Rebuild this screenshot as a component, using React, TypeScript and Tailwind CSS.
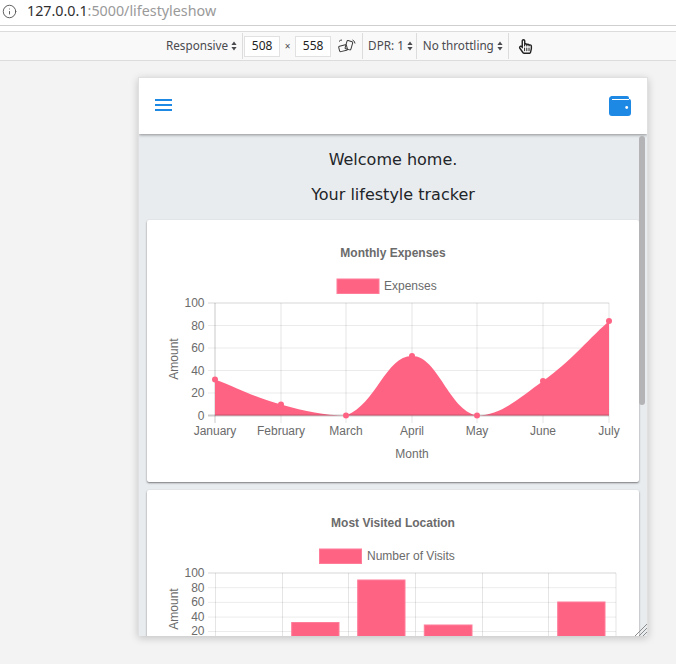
import { Info } from "lucide-react";
import { FaRegHandPointer } from "react-icons/fa";

const sans = "font-['Liberation_Sans',Arial,sans-serif]";
const ui = "font-['Noto_Sans',sans-serif]";

const months = ["January", "February", "March", "April", "May", "June", "July"];
const expenseX = [68, 134, 199, 265, 330, 396, 462];
const expenseY = [159.5, 184.5, 195.5, 136, 195.5, 161, 101];

// same control points chart.js uses for tension 0.4
function curve(xs: number[], ys: number[], floor: number) {
    const cp = (i: number, dir: number) => {
        const p = Math.max(i - 1, 0);
        const n = Math.min(i + 1, xs.length - 1);
        const d1 = Math.hypot(xs[i] - xs[p], ys[i] - ys[p]);
        const d2 = Math.hypot(xs[n] - xs[i], ys[n] - ys[i]);
        const total = d1 + d2 || 1;
        const f = dir < 0 ? (0.4 * d1) / total : (0.4 * d2) / total;
        return [xs[i] + dir * f * (xs[n] - xs[p]), Math.min(ys[i] + dir * f * (ys[n] - ys[p]), floor)];
    };
    let d = `M${xs[0]} ${ys[0]}`;
    for (let i = 0; i < xs.length - 1; i++) {
        const a = cp(i, 1);
        const b = cp(i + 1, -1);
        d += ` C${a[0]} ${a[1]} ${b[0]} ${b[1]} ${xs[i + 1]} ${ys[i + 1]}`;
    }
    return d;
}

function ExpensesChart() {
    const hLines = [83, 105.5, 128, 150.5, 173];
    return (
        <svg width="492" height="262" className="block">
            <text x="246" y="37" textAnchor="middle" fontSize="12" fontWeight="700" fill="#6b6b6b">
                Monthly Expenses
            </text>
            <rect x="190" y="59" width="42" height="14.5" fill="#ff6384" stroke="#ff7d99" strokeWidth="1" />
            <text x="237" y="70" fontSize="12" fill="#6b6b6b">
                Expenses
            </text>
            {hLines.map((y) => (
                <line key={y} x1="61" x2="462" y1={y} y2={y} stroke="rgba(0,0,0,0.08)" strokeWidth={y === 83 ? 2 : 1} />
            ))}
            {expenseX.map((x, i) => (
                <line key={x} x1={x} x2={x} y1="83" y2="203" stroke={i === 0 ? "rgba(0,0,0,0.14)" : "rgba(0,0,0,0.07)"} strokeWidth="1.5" />
            ))}
            <path d={`${curve(expenseX, expenseY, 195.5)} L462 195.5 L68 195.5 Z`} fill="#ff6384" />
            <line x1="61" x2="462" y1="195.5" y2="195.5" stroke="rgba(0,0,0,0.2)" strokeWidth="2" />
            {expenseX.map((x, i) => (
                <circle key={x} cx={x} cy={expenseY[i]} r="3" fill="#ff6384" />
            ))}
            {[100, 80, 60, 40, 20, 0].map((v, i) => (
                <text key={v} x="57.5" y={87 + i * 22.5} textAnchor="end" fontSize="12" fill="#6b6b6b">
                    {v}
                </text>
            ))}
            {months.map((m, i) => (
                <text key={m} x={expenseX[i]} y="215" textAnchor="middle" fontSize="12" fill="#6b6b6b">
                    {m}
                </text>
            ))}
            <text x="265" y="238" textAnchor="middle" fontSize="12" fill="#6b6b6b">
                Month
            </text>
            <text transform="translate(31 139) rotate(-90)" textAnchor="middle" fontSize="12" fill="#6b6b6b">
                Amount
            </text>
        </svg>
    );
}

function VisitsChart() {
    const hLines = [83, 97.7, 112.4, 127.1, 141.5];
    const vLines = [68.5, 135.5, 201.5, 268.5, 335.5, 401.5, 469];
    const bars = [
        { x: 144.7, w: 47.3, y: 132.5 },
        { x: 210.7, w: 47.3, y: 90 },
        { x: 277.3, w: 47.7, y: 135 },
        { x: 410.7, w: 47.3, y: 112 },
    ];
    return (
        <svg width="492" height="262" className="block">
            <text x="246" y="37" textAnchor="middle" fontSize="12" fontWeight="700" fill="#6b6b6b">
                Most Visited Location
            </text>
            <rect x="172.5" y="59" width="42" height="14.5" fill="#ff6384" stroke="#ff7d99" strokeWidth="1" />
            <text x="220" y="70" fontSize="12" fill="#6b6b6b">
                Number of Visits
            </text>
            {hLines.map((y) => (
                <line key={y} x1="61" x2="469" y1={y} y2={y} stroke="rgba(0,0,0,0.08)" strokeWidth={y === 83 ? 2 : 1} />
            ))}
            {vLines.map((x) => (
                <line key={x} x1={x} x2={x} y1="83" y2="200" stroke="rgba(0,0,0,0.1)" />
            ))}
            {bars.map((b) => (
                <rect key={b.x} x={b.x} y={b.y} width={b.w} height={200 - b.y} fill="#ff6384" stroke="#ff7d99" strokeWidth="1" />
            ))}
            {[100, 80, 60, 40, 20].map((v, i) => (
                <text key={v} x="57.5" y={87 + i * 14.5} textAnchor="end" fontSize="12" fill="#6b6b6b">
                    {v}
                </text>
            ))}
            <text transform="translate(31 119) rotate(-90)" textAnchor="middle" fontSize="12" fill="#6b6b6b">
                Amount
            </text>
        </svg>
    );
}

function Spinner() {
    return (
        <svg width="6" height="10" viewBox="0 0 6 10" className="ml-[3px]" fill="#4a4a4f">
            <path d="M3 0.5 L5.6 4 H0.4 Z M3 9.5 L5.6 6 H0.4 Z" />
        </svg>
    );
}

export default function App() {
    return (
        <div className={`w-[676px] h-[664px] overflow-hidden bg-[#f3f3f3] ${sans}`}>
            <div className={`h-[26px] bg-white border-b border-[#cfcfcf] flex items-center pl-[2px] pb-[3px] ${ui}`}>
                <Info size={15} strokeWidth={1.5} className="text-[#555]" />
                <span className="ml-[10px] text-[14.3px] text-[#9a9a9a]">
                    <span className="text-[#2f2f2f]">127.0.0.1</span>:5000/lifestyleshow
                </span>
            </div>
            <div className="h-[5px] bg-white" />
            <div className={`h-[30px] bg-[#f9f9f9] border-y border-[#dcdcdc] flex items-center pl-[166px] text-[11.7px] text-[#4a4a4f] ${ui}`}>
                <span>Responsive</span>
                <Spinner />
                <div className="ml-[5px] h-[26px] border-l border-[#dcdcdc]" />
                <div className="h-[21px] w-[36px] ml-[1px] bg-white border border-[#e1e1e1] flex items-center justify-center text-[12px] text-[#222]">508</div>
                <span className="w-[15px] text-center text-[10px]">×</span>
                <div className="h-[21px] w-[36px] bg-white border border-[#e1e1e1] flex items-center justify-center text-[12px] text-[#222]">558</div>
                <svg width="18" height="14" viewBox="0 0 18 14" className="ml-[7px]" fill="none" stroke="#3a3a3a" strokeWidth="1">
                    <rect x="1" y="6.5" width="8" height="5.5" rx="1" transform="rotate(-14 5 9)" />
                    <rect x="8" y="2" width="6" height="8.5" rx="1" transform="rotate(16 11 6)" />
                    <path d="M14.5 1 A4 4 0 0 1 17 4.5" />
                    <path d="M1 2.5 A4 4 0 0 1 4 1" />
                </svg>
                <div className="ml-[6px] h-[26px] border-l border-[#dcdcdc]" />
                <span className="ml-[5px]">DPR: 1</span>
                <Spinner />
                <div className="ml-[3px] h-[26px] border-l border-[#dcdcdc]" />
                <span className="ml-[6px]">No throttling</span>
                <Spinner />
                <div className="ml-[5px] h-[26px] border-l border-[#dcdcdc]" />
                <FaRegHandPointer size={15} className="ml-[9px] text-[#222]" />
            </div>
            <div className="relative mt-[16px] ml-[138px] w-[510px] h-[559px] border-t border-x border-[#e0e0e0] shadow-[0_2px_8px_rgba(0,0,0,0.2)] overflow-hidden bg-[#e9ecef]">
                <div className="h-[56px] bg-white shadow-[0_1px_3px_rgba(0,0,0,0.4)] flex items-center justify-between pl-[16px] pr-[16px] relative">
                    <div className="flex flex-col gap-[3px] mb-[2px]">
                        <div className="w-[17px] h-[2px] bg-[#1e88e5]" />
                        <div className="w-[17px] h-[2px] bg-[#1e88e5]" />
                        <div className="w-[17px] h-[2px] bg-[#1e88e5]" />
                    </div>
                    <svg width="22" height="20" viewBox="0 0 22 20">
                        <path d="M2.5 0 H18 A2 2 0 0 1 20 2 V3 H20 A2 2 0 0 1 22 5 V17 A3 3 0 0 1 19 20 H3 A3 3 0 0 1 0 17 V3 A3 3 0 0 1 2.5 0 Z" fill="#1e88e5" />
                        <rect x="3" y="3" width="17" height="1" fill="#fff" />
                        <circle cx="17.7" cy="11.5" r="1.4" fill="#fff" />
                    </svg>
                </div>
                <div className="h-[502px] overflow-hidden">
                    <div className="pl-[8px] w-[500px]">
                        <p className="pt-[14px] text-center text-[16px] leading-[24px] text-[#212529] font-['DejaVu_Sans',sans-serif]">Welcome home.</p>
                        <p className="mt-[11px] text-center text-[16px] leading-[24px] text-[#212529] font-['DejaVu_Sans',sans-serif]">Your lifestyle tracker</p>
                        <div className="mt-[13px] flex flex-col gap-[8px]">
                            <div className="bg-white rounded-[2px] shadow-[0_1px_2px_rgba(0,0,0,0.5)]">
                                <ExpensesChart />
                            </div>
                            <div className="bg-white rounded-[2px] shadow-[0_1px_2px_rgba(0,0,0,0.5)]">
                                <VisitsChart />
                            </div>
                        </div>
                    </div>
                </div>
                <div className="absolute top-[58px] right-[2px] w-[6px] h-[269px] rounded-[3px] bg-[#b4b4b6]" />
                <svg width="12" height="12" viewBox="0 0 12 12" className="absolute bottom-0 right-0" stroke="#8c8c8c" strokeWidth="1">
                    <path d="M0 12 L12 0 M4 12 L12 4 M8 12 L12 8" />
                </svg>
            </div>
        </div>
    );
}
